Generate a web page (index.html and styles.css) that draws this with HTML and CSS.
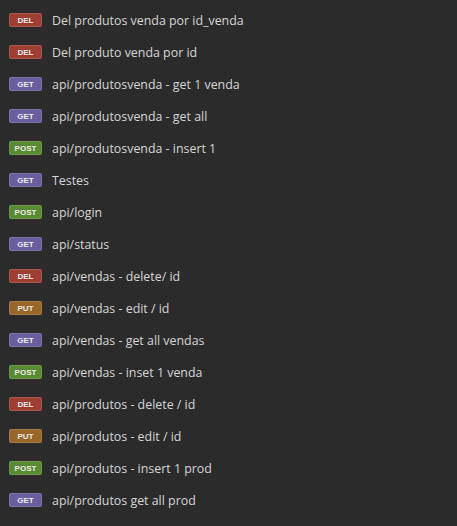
FILE: index.html
```html
<!DOCTYPE html>
<html>
<head>
<meta charset="utf-8">
<link rel="stylesheet" href="styles.css">
</head>
<body>
<ul class="list">
  <li class="row"><span class="badge del">DEL</span><span class="name">Del produtos venda por id_venda</span></li>
  <li class="row"><span class="badge del">DEL</span><span class="name">Del produto venda por id</span></li>
  <li class="row"><span class="badge get">GET</span><span class="name">api/produtosvenda - get 1 venda</span></li>
  <li class="row"><span class="badge get">GET</span><span class="name">api/produtosvenda - get all</span></li>
  <li class="row"><span class="badge post">POST</span><span class="name">api/produtosvenda - insert 1</span></li>
  <li class="row"><span class="badge get">GET</span><span class="name">Testes</span></li>
  <li class="row"><span class="badge post">POST</span><span class="name">api/login</span></li>
  <li class="row"><span class="badge get">GET</span><span class="name">api/status</span></li>
  <li class="row"><span class="badge del">DEL</span><span class="name">api/vendas - delete/ id</span></li>
  <li class="row"><span class="badge put">PUT</span><span class="name">api/vendas - edit / id</span></li>
  <li class="row"><span class="badge get">GET</span><span class="name">api/vendas - get all vendas</span></li>
  <li class="row"><span class="badge post">POST</span><span class="name">api/vendas - inset 1 venda</span></li>
  <li class="row"><span class="badge del">DEL</span><span class="name">api/produtos - delete / id</span></li>
  <li class="row"><span class="badge put">PUT</span><span class="name">api/produtos - edit / id</span></li>
  <li class="row"><span class="badge post">POST</span><span class="name">api/produtos - insert 1 prod</span></li>
  <li class="row"><span class="badge get">GET</span><span class="name">api/produtos get all prod</span></li>
</ul>
</body>
</html>
```
FILE: styles.css
```css
html, body {
  margin: 0;
  padding: 0;
  background: #2b2b2b;
  height: 100%;
}
body {
  font-family: "Open Sans", "Noto Sans", sans-serif;
}
.list {
  list-style: none;
  margin: 0;
  padding: 4px 0 0 9px;
}
.row {
  display: flex;
  align-items: center;
  height: 32px;
  gap: 10px;
}
.badge {
  box-sizing: border-box;
  width: 33px;
  height: 14px;
  border-radius: 2px;
  display: flex;
  align-items: center;
  justify-content: center;
  font-family: "Liberation Sans", Arial, sans-serif;
  font-weight: bold;
  font-size: 8px;
  color: #ececec;
  border: 1px solid rgba(255,255,255,0.12);
}
.del { background: #9c3e33; }
.get { background: #6a5e9d; }
.post { background: #5a8933; }
.put { background: #996528; }
.name {
  font-size: 12.4px;
  color: #d6d6d6;
  white-space: nowrap;
}
```
